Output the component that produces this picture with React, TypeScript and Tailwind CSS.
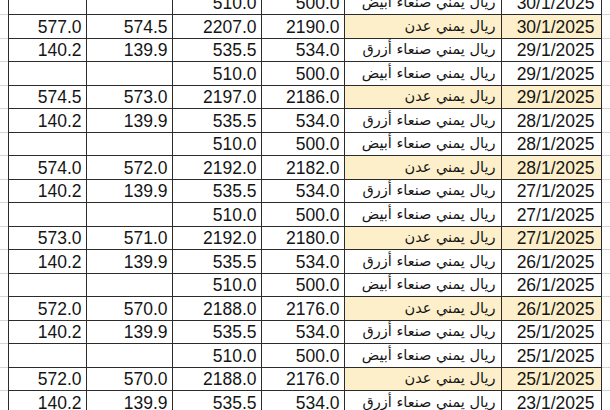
import React from 'react';

type Row = {
  c1: string;
  c2: string;
  c3: string;
  c4: string;
  name: string;
  date: string;
  aden?: boolean;
};

const WHITE = 'ريال يمني صنعاء أبيض';
const BLUE = 'ريال يمني صنعاء أزرق';
const ADEN = 'ريال يمني عدن';

const rows: Row[] = [
  { c1: '', c2: '', c3: '510.0', c4: '500.0', name: WHITE, date: '30/1/2025' },
  { c1: '577.0', c2: '574.5', c3: '2207.0', c4: '2190.0', name: ADEN, date: '30/1/2025', aden: true },
  { c1: '140.2', c2: '139.9', c3: '535.5', c4: '534.0', name: BLUE, date: '29/1/2025' },
  { c1: '', c2: '', c3: '510.0', c4: '500.0', name: WHITE, date: '29/1/2025' },
  { c1: '574.5', c2: '573.0', c3: '2197.0', c4: '2186.0', name: ADEN, date: '29/1/2025', aden: true },
  { c1: '140.2', c2: '139.9', c3: '535.5', c4: '534.0', name: BLUE, date: '28/1/2025' },
  { c1: '', c2: '', c3: '510.0', c4: '500.0', name: WHITE, date: '28/1/2025' },
  { c1: '574.0', c2: '572.0', c3: '2192.0', c4: '2182.0', name: ADEN, date: '28/1/2025', aden: true },
  { c1: '140.2', c2: '139.9', c3: '535.5', c4: '534.0', name: BLUE, date: '27/1/2025' },
  { c1: '', c2: '', c3: '510.0', c4: '500.0', name: WHITE, date: '27/1/2025' },
  { c1: '573.0', c2: '571.0', c3: '2192.0', c4: '2180.0', name: ADEN, date: '27/1/2025', aden: true },
  { c1: '140.2', c2: '139.9', c3: '535.5', c4: '534.0', name: BLUE, date: '26/1/2025' },
  { c1: '', c2: '', c3: '510.0', c4: '500.0', name: WHITE, date: '26/1/2025' },
  { c1: '572.0', c2: '570.0', c3: '2188.0', c4: '2176.0', name: ADEN, date: '26/1/2025', aden: true },
  { c1: '140.2', c2: '139.9', c3: '535.5', c4: '534.0', name: BLUE, date: '25/1/2025' },
  { c1: '', c2: '', c3: '510.0', c4: '500.0', name: WHITE, date: '25/1/2025' },
  { c1: '572.0', c2: '570.0', c3: '2188.0', c4: '2176.0', name: ADEN, date: '25/1/2025', aden: true },
  { c1: '140.2', c2: '139.9', c3: '535.5', c4: '534.0', name: BLUE, date: '23/1/2025' },
];

const cell =
  'flex items-end justify-end pr-[4px] pb-[1px] border-r-[1.5px] border-[#2b2b2b] overflow-hidden whitespace-nowrap';

export default function App() {
  return (
    <div
      className="w-[610px] h-[410px] overflow-hidden bg-white text-[#151515] text-[17.5px] leading-[20px]"
      style={{ fontFamily: '"Liberation Sans", Arial, "DejaVu Sans", sans-serif' }}
    >
      <div className="-mt-[8.5px]">
        {rows.map((r, i) => (
          <div key={i} className="flex h-[23.5px]">
            <div className="w-[7.5px] shrink-0 border-b border-[#d4d4d4]" />
            <div className="flex flex-1 border-b-[1.5px] border-l-[1.5px] border-[#2b2b2b]">
              <div className={`${cell} w-[78px]`}>{r.c1}</div>
              <div className={`${cell} w-[86px]`}>{r.c2}</div>
              <div className={`${cell} w-[89px]`}>{r.c3}</div>
              <div className={`${cell} w-[83px]`}>{r.c4}</div>
              <div
                dir="rtl"
                className={`${cell} w-[157px] justify-start pr-[5px] pb-[2px] ${r.aden ? 'bg-[#fcefc9]' : ''}`}
                style={{ fontFamily: '"DejaVu Sans", "Noto Sans", sans-serif', fontSize: '14.5px' }}
              >
                {r.name}
              </div>
              <div className={`${cell} w-[100px] pr-[6px] ${r.aden ? 'bg-[#fcefc9]' : ''}`}>{r.date}</div>
            </div>
            <div className="w-[8px] shrink-0 border-b border-[#d4d4d4]" />
          </div>
        ))}
      </div>
    </div>
  );
}
